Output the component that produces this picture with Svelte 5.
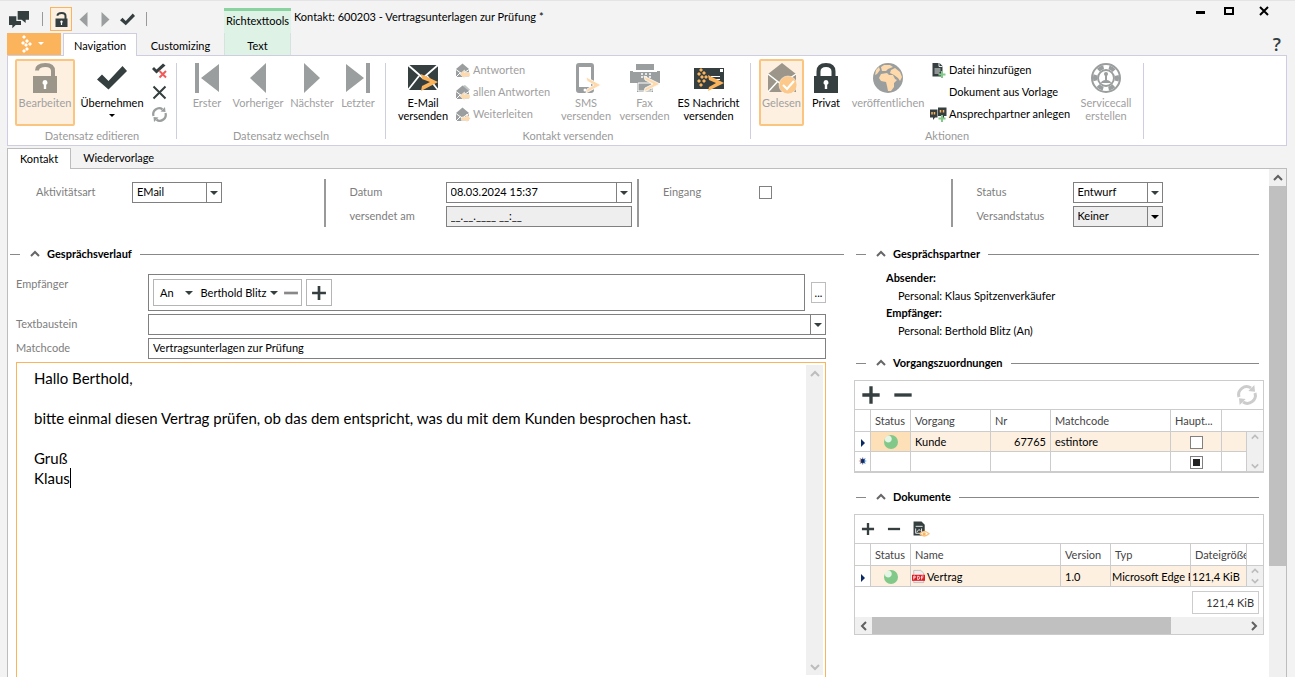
<script>
  let activityType = $state('EMail')
  let date = $state('08.03.2024 15:37')
  let incoming = $state(false)
  let status = $state('Entwurf')
  let matchcode = $state('Vertragsunterlagen zur Prüfung')
  let message = $state(
    'Hallo Berthold,\n\nbitte einmal diesen Vertrag prüfen, ob das dem entspricht, was du mit dem Kunden besprochen hast.\n\nGruß\nKlaus'
  )

  const groups = [
    {
      id: 'edit',
      label: 'Datensatz editieren',
      items: [
        { text: 'Bearbeiten', icon: 'unlock', disabled: true, active: true },
        { text: 'Übernehmen', icon: 'check', menu: true },
        {
          list: [
            { title: 'Verwerfen', icon: 'check-x' },
            { title: 'Schließen', icon: 'x' },
            { title: 'Aktualisieren', icon: 'refresh', disabled: true },
          ],
        },
      ],
    },
    {
      id: 'move',
      label: 'Datensatz wechseln',
      items: [
        { text: 'Erster', icon: 'first', disabled: true },
        { text: 'Vorheriger', icon: 'prev', disabled: true },
        { text: 'Nächster', icon: 'next', disabled: true },
        { text: 'Letzter', icon: 'last', disabled: true },
      ],
    },
    {
      id: 'send',
      label: 'Kontakt versenden',
      items: [
        { text: 'E-Mail\nversenden', icon: 'mail' },
        {
          list: [
            { text: 'Antworten', icon: 'reply', disabled: true },
            { text: 'allen Antworten', icon: 'reply-all', disabled: true },
            { text: 'Weiterleiten', icon: 'forward', disabled: true },
          ],
        },
        { text: 'SMS\nversenden', icon: 'sms', disabled: true },
        { text: 'Fax\nversenden', icon: 'fax', disabled: true },
        { text: 'ES Nachricht\nversenden', icon: 'es' },
      ],
    },
    {
      id: 'actions',
      label: 'Aktionen',
      items: [
        { text: 'Gelesen', icon: 'read', disabled: true, active: true },
        { text: 'Privat', icon: 'lock' },
        { text: 'veröffentlichen', icon: 'globe', disabled: true },
        {
          list: [
            { text: 'Datei hinzufügen', icon: 'file-add' },
            { text: 'Dokument aus Vorlage', icon: 'none' },
            { text: 'Ansprechpartner anlegen', icon: 'contact-add' },
          ],
        },
        { text: 'Servicecall\nerstellen', icon: 'service', disabled: true },
      ],
    },
  ]
</script>

{#snippet icon(name, size = 30)}
  <svg class="icon" width={size} height={size} viewBox="0 0 30 30" fill="currentColor" aria-hidden="true">
    {#if name === 'unlock'}
      <path d="M3 13H27V30H3Z" />
      <path d="M7 7.500C7 3 10.500 2 15.500 2S23 4 23 8V14" fill="none" stroke="currentColor" stroke-width="4" />
      <path d="M15 17a2.500 2.500 0 0 1 1.200 4.700V26h-2.400v-4.300A2.500 2.500 0 0 1 15 17Z" fill="#fff" />
    {:else if name === 'lock'}
      <path d="M3 13H27V30H3Z" />
      <path d="M7.500 14V8.500C7.500 4 10 2 15 2s7.500 2 7.500 6.500V14" fill="none" stroke="currentColor" stroke-width="4" />
      <path d="M15 17a2.500 2.500 0 0 1 1.200 4.700V26h-2.400v-4.300A2.500 2.500 0 0 1 15 17Z" fill="#fff" />
    {:else if name === 'check'}
      <path d="M0 16.500 5 11.500 11.500 18 25.500 3 30 8 11.500 26.500Z" />
    {:else if name === 'check-x'}
      <path d="M0 12 4 8 9 13 22 1 27 5 9 21Z" />
      <path d="M15 16 28 29M28 16 15 29" stroke="#ef5b5b" stroke-width="4" />
    {:else if name === 'x'}
      <path d="M3 3 27 27M27 3 3 27" stroke="currentColor" stroke-width="4" />
    {:else if name === 'refresh'}
      <path d="M3 18A12 12 0 0 1 21 4.500M27 12A12 12 0 0 1 9 25.500" fill="none" stroke="currentColor" stroke-width="4.500" />
      <path d="M17 9 27 10 26 0ZM13 21 3 20 4 30Z" />
    {:else if name === 'first'}
      <path d="M3 0H7V30H3ZM27 1V29L9 15Z" />
    {:else if name === 'last'}
      <path d="M23 0H27V30H23ZM3 1V29L21 15Z" />
    {:else if name === 'prev'}
      <path d="M23 0V30L7 15Z" />
    {:else if name === 'next'}
      <path d="M7 0V30L23 15Z" />
    {:else if name === 'mail'}
      <path d="M0 2H30V27H0Z" />
      <path d="M0 2 15 15 30 2M0 27 11 13M30 27 19 13" fill="none" stroke="#fff" stroke-width="1.800" />
      <path d="M13 11 30 19 13 28 14 23 22 19 14 16Z" fill="#fbb45c" />
    {:else if name === 'reply' || name === 'reply-all' || name === 'forward'}
      <path d="M2 12 15 1 28 12V28H2Z" />
      <path d="M2 13 14 22M28 13 17 20M2 28 11 19" stroke="#fff" stroke-width="2" />
      {#if name === 'reply-all'}
        <path d="M15 2 27 12 30 9 20 0Z" opacity="0.600" />
      {/if}
      {#if name === 'forward'}
        <path d="M31 23 23 14V20H13V27H23V31Z" fill="#fdd9ac" stroke="#fff" />
      {:else}
        <path d="M10 22 19 14V19H30V27H19V31Z" fill="#fdd9ac" stroke="#fff" />
      {/if}
    {:else if name === 'sms'}
      <path d="M8 0H20Q23 0 23 3V27Q23 30 20 30H8Q5 30 5 27V3Q5 0 8 0ZM8 4V24H20V4Z" fill-rule="evenodd" />
      <circle cx="14" cy="27" r="1.500" fill="#fff" />
      <path d="M15 14 30 22 15 30 16 26 23 22 16 18Z" fill="#fdd9ac" stroke="#fff" stroke-width="0.800" />
    {:else if name === 'fax'}
      <path d="M6 1H24V7H6ZM0 8H3V9H27V8H30V20H23V29H7V20H0Z" />
      <path d="M8 20H22V28H8Z" fill="none" stroke="#fff" />
      <path d="M11 11H13M15 11H17M19 11H21M11 14H13M15 14H17M19 14H21" stroke="#fff" stroke-width="1.500" />
      <path d="M14 13 30 21 14 29 15 25 23 21 15 17Z" fill="#fdd9ac" stroke="#fff" stroke-width="0.800" />
    {:else if name === 'es'}
      <path d="M0 5H30V26H0Z" />
      <path d="M26 6H29V9H26ZM17 13H26V14H17ZM18 16H26V17H18Z" fill="#fff" />
      <path d="M7 5 9 7 7 9 5 7ZM10 8 12 10 10 12 8 10ZM5 9 7 11 5 13 3 11ZM12 12 14 14 12 16 10 14ZM8 12 10 14 8 16 6 14ZM10 16 12 18 10 20 8 18ZM5 16 7 18 5 20 3 18ZM7 20 9 22 7 24 5 22Z" fill="#fbb45c" />
      <path d="M14 12 30 20 14 28 15 24 22 20 15 17Z" fill="#fbb45c" />
    {:else if name === 'read'}
      <path d="M1 11 15 0 29 11V29H1Z" />
      <path d="M1 11 14 21 29 11M1 29 11 18" fill="none" stroke="#fff" stroke-width="1.500" />
      <circle cx="21" cy="22" r="9" fill="#fcc98b" stroke="#fff" stroke-width="0.500" />
      <path d="M16 22 20 26 27 18" fill="none" stroke="#fff" stroke-width="2.200" />
    {:else if name === 'globe'}
      <circle cx="15" cy="15" r="15" />
      <path d="M3 7 6 4 7 7 4 11 2 12ZM8 4 11 2 17 2 20 4 15 6 13 8 9 8ZM8 11 14 10 16 12 20 12 22 16 24 17 21 20 21 24 18 28 15 28 14 23 13 19 8 18 6 15ZM18 7 22 5 27 9 29 14 27 18 25 15 21 12 17 10Z" fill="#fdd9ac" />
    {:else if name === 'service'}
      <circle cx="15" cy="15" r="14" fill="none" stroke="currentColor" stroke-width="2" />
      <circle cx="15" cy="15" r="11" fill="none" stroke="currentColor" stroke-width="4" stroke-dasharray="6 5.519" stroke-dashoffset="3" />
      <circle cx="15" cy="15" r="8" fill="none" stroke="currentColor" stroke-width="2" />
      <circle cx="15" cy="11" r="2" />
      <path d="M14 12H16V17Q20 18 20 20H10Q10 18 14 17Z" />
    {:else if name === 'file-add'}
      <path d="M3 0H17L23 6V27H3Z" />
      <path d="M16 0V7H23M7 12H19M7 16H19M7 20H17" fill="none" stroke="#fff" stroke-width="1.800" />
      <path d="M22 16V30M15 23H29" stroke="#82c889" stroke-width="4" />
    {:else if name === 'contact-add'}
      <path d="M-2 5H13V21H8L4 26V21H-2ZM14 1H31V18H26V23L20 18H14Z" />
      <path d="M2 10V15M7 10V15M19 6V11M25 6V11" stroke="#fbb45c" stroke-width="3" />
      <path d="M22 16V30M15 23H29" stroke="#82c889" stroke-width="4" />
    {:else if name === 'chat'}
      <path d="M13 3H30V16H25V21L19 16H13Z" />
      <path d="M0 11H11V18H18V24H10L5 29V24H0Z" />
    {:else if name === 'plus'}
      <path d="M12.500 2H17.500V12.500H28V17.500H17.500V28H12.500V17.500H2V12.500H12.500Z" />
    {:else if name === 'minus'}
      <path d="M2 12.500H28V17.500H2Z" />
    {:else if name === 'preview'}
      <path d="M1 1H16L22 7V27H1Z" />
      <path d="M5 10H18M5 14V23H16V14M7 21 11 16 14 18" fill="none" stroke="#fff" stroke-width="1.600" />
      <path d="M13 24Q21 15 30 24Q21 32 13 24Z" fill="#fff" stroke="#fbc07a" stroke-width="2.500" />
      <circle cx="21" cy="24" r="3" fill="#fbb45c" />
    {:else if name === 'pdf'}
      <path d="M4 1H20L27 7V29H4Z" fill="#eee" stroke="#aaa" stroke-width="1.500" />
      <path d="M0 11H30V25H0Z" fill="#e01a22" />
      <path d="M4 22V14H7Q9 16 7 18H4M13 14V22Q18 22 18 18T13 14M22 22V14H27M22 18H26" fill="none" stroke="#fff" stroke-width="1.800" />
    {/if}
  </svg>
{/snippet}

{#snippet arrow(dir)}
  <svg class="chevron {dir}" width="10" height="10" viewBox="0 0 10 10" aria-hidden="true">
    <path d="M1 7 5 3 9 7" fill="none" stroke="currentColor" stroke-width="2" />
  </svg>
{/snippet}

{#snippet heading(text)}
  <h2>
    <button aria-label="{text} einklappen">{@render arrow('up')}</button>
    <span>{text}</span>
  </h2>
{/snippet}

<div class="window">
  <header>
    <div class="titlebar">
      <div class="quick">
        <span class="app-icon">{@render icon('chat', 20)}</span>
        <i class="sep"></i>
        <button class="active" aria-label="Bearbeiten">{@render icon('unlock', 15)}</button>
        <button class="muted" aria-label="Zurück">{@render icon('prev', 15)}</button>
        <button class="muted" aria-label="Vor">{@render icon('next', 15)}</button>
        <button aria-label="Übernehmen">{@render icon('check', 15)}</button>
        <i class="sep"></i>
      </div>
      <div class="context-title">Richtexttools</div>
      <h1>Kontakt: 600203 - Vertragsunterlagen zur Prüfung *</h1>
      <div class="window-buttons">
        <button aria-label="Minimieren"><svg width="10" height="10"><path d="M0 5H9V8H0Z" /></svg></button>
        <button aria-label="Maximieren"><svg width="10" height="10"><path d="M1 2H9V8H1Z" fill="none" stroke="#000" stroke-width="2" /></svg></button>
        <button class="close" aria-label="Schließen"><svg width="10" height="10"><path d="M1 1 9 9M9 1 1 9" stroke="#000" stroke-width="2" /></svg></button>
      </div>
    </div>

    <nav class="ribbon-tabs">
      <button class="file" aria-label="Datei">
        <svg width="26" height="18" viewBox="0 0 26 18" fill="#fff">
          <path d="M3 0 5 2 3 4 1 2ZM6 4 8 6 6 8 4 6ZM2 6 4 8 2 10 0 8ZM9 7 11 9 9 11 7 9ZM5 8 7 10 5 12 3 10ZM6 12 8 14 6 16 4 14ZM3 14 5 16 3 18 1 16ZM17 7H23L20 10Z" />
        </svg>
      </button>
      <button class="tab selected">Navigation</button>
      <button class="tab">Customizing</button>
      <button class="context-tab">Text</button>
      <button class="help">?</button>
    </nav>
  </header>

  <div class="ribbon">
    {#each groups as group (group.id)}
      <section class="group">
        <div class="group-items {group.id}">
          {#each group.items as item}
            {#if item.list}
              <div class="small-list">
                {#each item.list as entry}
                  <button class="small" disabled={entry.disabled} aria-label={entry.title}>
                    {@render icon(entry.icon, 15)}
                    {#if entry.text}<span>{entry.text}</span>{/if}
                  </button>
                {/each}
              </div>
            {:else}
              <button class="large" class:active={item.active} disabled={item.disabled}>
                {@render icon(item.icon)}
                <span>{item.text}</span>
                {#if item.menu}<i class="triangle"></i>{/if}
              </button>
            {/if}
          {/each}
        </div>
        <div class="group-label">{group.label}</div>
      </section>
    {/each}
  </div>

  <nav class="page-tabs">
    <button class="selected">Kontakt</button>
    <button>Wiedervorlage</button>
  </nav>

  <div class="page">
    <main>
      <div class="top-form">
        <div class="form-col">
          <div class="field">
            <label for="activity">Aktivitätsart</label>
            <div class="combo">
              <select id="activity" bind:value={activityType}><option>EMail</option></select>
              <span class="drop"><i class="triangle"></i></span>
            </div>
          </div>
        </div>
        <div class="form-col">
          <div class="field">
            <label for="date">Datum</label>
            <div class="combo wide">
              <input id="date" type="text" bind:value={date} />
              <span class="drop"><i class="triangle"></i></span>
            </div>
          </div>
          <div class="field">
            <label for="sent">versendet am</label>
            <div class="combo wide readonly">
              <input id="sent" type="text" value="__.__.____ __:__" readonly />
            </div>
          </div>
        </div>
        <div class="form-col">
          <div class="field">
            <label for="incoming">Eingang</label>
            <input id="incoming" type="checkbox" bind:checked={incoming} />
          </div>
        </div>
        <div class="form-col">
          <div class="field">
            <label for="status">Status</label>
            <div class="combo">
              <select id="status" bind:value={status}><option>Entwurf</option></select>
              <span class="drop"><i class="triangle"></i></span>
            </div>
          </div>
          <div class="field">
            <label for="send-status">Versandstatus</label>
            <div class="combo readonly">
              <select id="send-status"><option>Keiner</option></select>
              <span class="drop"><i class="triangle"></i></span>
            </div>
          </div>
        </div>
      </div>

      <div class="columns">
        <section class="conversation">
          {@render heading('Gesprächsverlauf')}
          <div class="details">
            <div class="detail-row recipients">
              <span class="row-label">Empfänger</span>
              <div class="recipient-box">
                <div class="chip">
                  <button class="kind">An <i class="triangle"></i></button>
                  <button>Berthold Blitz <i class="triangle"></i></button>
                  <button class="remove" aria-label="Empfänger entfernen">{@render icon('minus', 16)}</button>
                </div>
                <button class="add" aria-label="Empfänger hinzufügen">{@render icon('plus', 16)}</button>
              </div>
              <button class="more">...</button>
            </div>
            <div class="detail-row">
              <label for="snippet">Textbaustein</label>
              <div class="combo">
                <select id="snippet"><option></option></select>
                <span class="drop"><i class="triangle"></i></span>
              </div>
            </div>
            <div class="detail-row">
              <label for="matchcode">Matchcode</label>
              <div class="combo"><input id="matchcode" type="text" bind:value={matchcode} /></div>
            </div>
            <div class="editor">
              <textarea aria-label="Nachricht" spellcheck="false" bind:value={message}></textarea>
              <i class="caret"></i>
              <div class="scrollbar faint">
                {@render arrow('up')}
                {@render arrow('down')}
              </div>
            </div>
          </div>
        </section>

        <aside>
          <section>
            {@render heading('Gesprächspartner')}
            <dl>
              <dt>Absender:</dt>
              <dd>Personal: Klaus Spitzenverkäufer</dd>
              <dt>Empfänger:</dt>
              <dd>Personal: Berthold Blitz (An)</dd>
            </dl>
          </section>

          <section>
            {@render heading('Vorgangszuordnungen')}
            <div class="grid-box">
              <div class="toolbar large-icons">
                <button aria-label="Hinzufügen">{@render icon('plus', 20)}</button>
                <button aria-label="Entfernen">{@render icon('minus', 20)}</button>
                <button class="reload" aria-label="Aktualisieren">{@render icon('refresh', 20)}</button>
              </div>
              <table>
                <colgroup>
                  <col class="c-mark" /><col class="c-status" /><col class="c-process" /><col class="c-nr" /><col />
                  <col class="c-main" /><col class="c-rest" /><col class="c-scroll" />
                </colgroup>
                <thead>
                  <tr>
                    <th></th><th>Status</th><th>Vorgang</th><th>Nr</th><th>Matchcode</th><th>Haupt...</th><th colspan="2"></th>
                  </tr>
                </thead>
                <tbody>
                  <tr class="current">
                    <td class="mark"><i class="pointer"></i></td>
                    <td class="center focus"><i class="ball"></i></td>
                    <td>Kunde</td>
                    <td class="number">67765</td>
                    <td>estintore</td>
                    <td class="center"><input type="checkbox" aria-label="Hauptvorgang" /></td>
                    <td></td>
                    <td class="scroll-cell" rowspan="2">
                      <div class="scrollbar faint">{@render arrow('up')}{@render arrow('down')}</div>
                    </td>
                  </tr>
                  <tr>
                    <td class="mark star">✷</td>
                    <td></td><td></td><td></td><td></td>
                    <td class="center"><input type="checkbox" aria-label="Hauptvorgang neu" indeterminate={true} /></td>
                    <td></td>
                  </tr>
                </tbody>
              </table>
            </div>
          </section>

          <section>
            {@render heading('Dokumente')}
            <div class="grid-box">
              <div class="toolbar">
                <button aria-label="Hinzufügen">{@render icon('plus', 14)}</button>
                <button aria-label="Entfernen">{@render icon('minus', 14)}</button>
                <button aria-label="Vorschau">{@render icon('preview', 16)}</button>
              </div>
              <table>
                <colgroup>
                  <col class="c-mark" /><col class="c-status" /><col /><col class="c-version" /><col class="c-type" />
                  <col class="c-size" /><col class="c-scroll" />
                </colgroup>
                <thead>
                  <tr>
                    <th></th><th>Status</th><th>Name</th><th>Version</th><th>Typ</th><th>Dateigröße</th><th></th>
                  </tr>
                </thead>
                <tbody>
                  <tr class="current">
                    <td class="mark"><i class="pointer"></i></td>
                    <td class="center"><i class="ball"></i></td>
                    <td class="tight"><span class="file-name">{@render icon('pdf', 13)} Vertrag</span></td>
                    <td>1.0</td>
                    <td class="tight">Microsoft Edge P</td>
                    <td class="tight">121,4 KiB</td>
                    <td class="scroll-cell">
                      <div class="scrollbar faint">{@render arrow('up')}{@render arrow('down')}</div>
                    </td>
                  </tr>
                </tbody>
              </table>
              <div class="sum"><output>121,4 KiB</output></div>
              <div class="scrollbar horizontal">
                {@render arrow('left')}
                <div class="track"><i class="thumb"></i></div>
                {@render arrow('right')}
              </div>
            </div>
          </section>
        </aside>
      </div>
    </main>

    <div class="scrollbar page-scroll">
      {@render arrow('up')}
      <div class="track"><i class="thumb"></i></div>
    </div>
  </div>
</div>

<style>
  :global(body) {
    margin: 0;
    background: #f3f3f3;
  }

  .window {
    box-sizing: border-box;
    height: 100vh;
    overflow: hidden;
    display: flex;
    flex-direction: column;
    padding: 0 8px 0 7px;
    border-top: 1px solid #e4e4e6;
    color: #000;
    background: #f3f3f3;
    font-family: Lato, Carlito, Calibri, sans-serif;
    font-size: 11px;
    line-height: 13px;
  }

  .window :global(*) {
    box-sizing: border-box;
  }

  button {
    padding: 0;
    border: 0;
    background: none;
    color: #353f40;
    font: inherit;
    white-space: nowrap;
  }

  .icon {
    color: #353f40;
  }

  svg {
    display: block;
    flex: none;
    overflow: visible;
  }

  button .icon {
    color: inherit;
  }

  .triangle {
    border: 4px solid transparent;
    border-top: 4px solid #353f40;
    border-bottom: 0;
  }

  /* title bar */
  .titlebar {
    display: flex;
    height: 32px;
  }

  .quick {
    display: flex;
    align-items: center;
    width: 217px;
    padding: 4px 0 0 2px;
  }

  .quick button {
    display: grid;
    place-items: center;
    width: 22px;
    height: 24px;
  }

  .quick .active {
    border: 1px solid #fbb45c;
    background: #fdf0e0;
  }

  .quick .muted {
    color: #9b9e9e;
  }

  .sep {
    width: 1px;
    height: 14px;
    margin: 0 7px 0 13px;
    background: #999;
  }

  .sep:last-child {
    margin: 0 0 0 8px;
  }

  .context-title {
    width: 67px;
    margin-top: 7px;
    padding-top: 3px;
    border-top: 3px solid #8ad2a0;
    background: #def2e6;
    text-align: center;
  }

  h1 {
    margin: 0;
    padding-left: 3px;
    font-size: 11px;
    font-weight: 400;
    line-height: 32px;
  }

  .window-buttons {
    display: flex;
    gap: 18px;
    margin-left: auto;
    padding: 5px 18px 0 0;
    align-items: flex-start;
  }

  .window-buttons .close {
    margin-left: 7px;
  }

  .ribbon-tabs {
    display: flex;
    height: 22px;
  }

  .ribbon-tabs button {
    color: #000;
  }

  .file {
    display: grid;
    place-items: center;
    width: 54px;
    margin-right: 2px;
    background: #fbb45c;
  }

  .tab {
    width: 87px;
    padding-top: 2px;
    border: 1px solid transparent;
    border-bottom: 0;
  }

  .tab.selected {
    position: relative;
    z-index: 1;
    width: 74px;
    height: 23px;
    padding-top: 0;
    border-color: #cfcde0;
    background: #fff;
  }

  .context-tab {
    width: 67px;
    padding-top: 2px;
    border: 1px solid #d5e2e0;
    border-width: 0 1px;
    background: #def2e6;
  }

  .ribbon-tabs .help {
    margin-left: auto;
    padding-right: 6px;
    color: #353f40;
    font-family: 'Open Sans', sans-serif;
    font-size: 18px;
    font-weight: 600;
    line-height: 18px;
  }

  /* ribbon */
  .ribbon {
    display: flex;
    flex: none;
    height: 91px;
    padding-top: 3px;
    border: 1px solid #cfcde0;
    background: #fff;
  }

  .group {
    position: relative;
    border-right: 1px solid transparent;
  }

  .group::after {
    content: '';
    position: absolute;
    top: 4px;
    right: -1px;
    width: 1px;
    height: 76px;
    background: #cfcde0;
  }

  .group-items {
    display: grid;
    height: 67px;
  }

  .group-items.edit {
    grid-template-columns: 60px 74px 22px;
    padding: 0 5px 0 7px;
  }

  .group-items.move {
    grid-template-columns: 40px 62px 46px 46px;
    padding: 0 4px 0 10px;
  }

  .group-items.send {
    grid-template-columns: 58px 105px 58px 59px 69px;
    padding: 0 7px 0 8px;
  }

  .group-items.actions {
    grid-template-columns: 45px 44px 80px 148px 60px;
    padding: 0 7px 0 8px;
  }

  .group-label {
    padding-top: 3px;
    color: #999;
    text-align: center;
  }

  .large {
    display: flex;
    flex-direction: column;
    align-items: center;
    padding-top: 3px;
    border: 1px solid transparent;
    border-radius: 2px;
  }

  .large span {
    margin: 3px -8px 0;
    color: #000;
    white-space: pre-line;
  }

  .large .triangle {
    margin-top: 5px;
    border-width: 3px 3px 0;
    border-top-color: #000;
  }

  .large:disabled,
  .small:disabled {
    color: #9b9e9e;
  }

  .large:disabled span,
  .small:disabled span {
    color: #a0a0a0;
  }

  .large.active {
    border: 2px solid #fbc580;
    padding-top: 2px;
    background: #fdf0e0;
    color: #9b9689;
  }

  .small-list {
    display: flex;
    flex-direction: column;
    padding: 0 3px;
  }

  .small {
    display: flex;
    align-items: center;
    gap: 3px;
    height: 22px;
  }

  .small span {
    padding-bottom: 2px;
    color: #000;
  }

  /* page */
  .page-tabs {
    display: flex;
    height: 22px;
    flex: none;
    margin-top: 2px;
  }

  .page-tabs button {
    padding: 0 12px 3px;
    color: #000;
  }

  .page-tabs .selected {
    position: relative;
    z-index: 1;
    height: 21px;
    padding-bottom: 1px;
    border: 1px solid #bdbdbd;
    border-bottom: 0;
    background: #fff;
  }

  .page {
    display: flex;
    flex: 1;
    min-height: 0;
    margin-top: -2px;
    border: 1px solid #bdbdbd;
    border-bottom: 0;
    background: #fff;
  }

  main {
    display: flex;
    flex: 1;
    flex-direction: column;
    min-width: 0;
    padding-top: 10px;
  }

  .top-form {
    display: grid;
    flex: none;
    grid-template-columns: repeat(4, 1fr);
    height: 48px;
    padding: 0 3px 0 4px;
  }

  .form-col {
    display: flex;
    flex-direction: column;
    gap: 3px;
    padding: 3px 0 0 24px;
    border-right: 2px solid #999;
  }

  .form-col:last-child {
    border-right-color: transparent;
  }

  .field {
    display: grid;
    grid-template-columns: 96px 1fr;
    align-items: center;
    height: 21px;
  }

  label,
  .row-label {
    padding-bottom: 2px;
    color: #7d7d7d;
  }

  .combo {
    display: flex;
    height: 21px;
    border: 1px solid #808080;
    background: #fff;
  }

  .field .combo {
    width: 90px;
  }

  .field .combo.wide {
    width: 186px;
  }

  .combo.readonly {
    background: #eee;
  }

  .combo select,
  .combo input {
    flex: 1;
    min-width: 0;
    appearance: none;
    padding: 0 4px 2px;
    border: 0;
    outline: 0;
    background: none;
    color: #000;
    font: inherit;
  }

  .drop {
    display: grid;
    place-items: center;
    width: 15px;
    border-left: 1px solid #808080;
  }

  .readonly .triangle {
    border-top-color: #000;
  }

  input[type='checkbox'] {
    appearance: none;
    width: 13px;
    height: 13px;
    margin: 0;
    border: 1px solid #808080;
    background: #fff;
  }

  input[type='checkbox']:checked,
  input[type='checkbox']:indeterminate {
    background: #222;
    box-shadow: inset 0 0 0 2px #fff;
  }

  .columns {
    display: grid;
    flex: 1;
    grid-template-columns: minmax(0, 834fr) minmax(0, 410fr);
    gap: 10px;
    min-height: 0;
    padding: 20px 5px 0 2px;
  }

  h2 {
    display: flex;
    align-items: center;
    flex: none;
    height: 14px;
    margin: 0;
    font-size: 11px;
    font-weight: 700;
  }

  h2::before,
  h2::after {
    content: '';
    width: 10px;
    height: 1px;
    background: #888;
  }

  h2::after {
    flex: 1;
  }

  h2 button {
    padding: 0 7px 0 10px;
    color: #666;
  }

  h2 span {
    margin-right: 8px;
    padding-bottom: 1px;
  }

  .conversation {
    display: flex;
    flex-direction: column;
    min-height: 0;
  }

  .details {
    display: flex;
    flex: 1;
    flex-direction: column;
    gap: 3px;
    min-height: 0;
    padding: 13px 18px 0 6px;
  }

  .detail-row {
    display: grid;
    grid-template-columns: 132px 1fr;
    align-items: center;
  }

  .detail-row.recipients {
    grid-template-columns: 132px 1fr 15px;
  }

  .row-label {
    align-self: start;
    padding-top: 3px;
  }

  .recipient-box {
    display: flex;
    gap: 4px;
    height: 37px;
    margin-right: 6px;
    padding: 4px;
    border: 1px solid #808080;
  }

  .chip {
    display: flex;
    gap: 8px;
    padding: 0 2px 0 6px;
    border: 1px solid #b5b5b5;
  }

  .chip button {
    display: flex;
    gap: 4px;
    align-items: center;
    color: #000;
  }

  .chip .kind {
    gap: 11px;
  }

  .chip .remove {
    margin-left: -3px;
    color: #888;
  }

  .add {
    display: grid;
    place-items: center;
    width: 26px;
    border: 1px solid #b5b5b5;
  }

  .more {
    height: 21px;
    border: 1px solid #bdbdbd;
    color: #000;
  }

  .editor {
    position: relative;
    display: flex;
    flex: 1;
    min-height: 0;
    padding: 2px 2px 2px 0;
    border: 1px solid #fbb45c;
    border-bottom: 0;
  }

  textarea {
    flex: 1;
    padding: 3px 17px;
    border: 0;
    outline: 0;
    resize: none;
    overflow: hidden;
    background: none;
    color: #000;
    font: 15px/20px Lato, Carlito, Calibri, sans-serif;
  }

  .caret {
    position: absolute;
    top: 105px;
    left: 53px;
    width: 1px;
    height: 20px;
    background: #000;
  }

  /* scrollbars */
  .scrollbar {
    display: flex;
    flex-direction: column;
    align-items: center;
    justify-content: space-between;
    flex: none;
    width: 17px;
    background: #f0f0f0;
    color: #606060;
  }

  .scrollbar :global(.chevron) {
    margin: 4px 0 3px;
  }

  .scrollbar.faint {
    color: #bdbdbd;
  }

  .chevron.down {
    transform: rotate(180deg);
  }

  .chevron.left {
    transform: rotate(-90deg);
  }

  .chevron.right {
    transform: rotate(90deg);
  }

  .track {
    flex: 1;
    width: 100%;
  }

  .thumb {
    display: block;
    height: 77%;
    background: #c0c0c0;
  }

  .page-scroll .thumb {
    height: 380px;
  }

  .scrollbar.horizontal {
    flex-direction: row;
    width: 100%;
    height: 17px;
    gap: 3px;
    padding: 0 4px;
  }

  .horizontal .thumb {
    width: 80%;
    height: 17px;
  }

  /* right column */
  aside {
    display: flex;
    flex-direction: column;
    min-width: 0;
  }

  aside h2 {
    margin: 0 5px 0 2px;
  }

  dl {
    margin: 8px 0 17px 32px;
  }

  dt {
    font-weight: 700;
    line-height: 18px;
  }

  dd {
    margin-left: 12px;
    line-height: 17px;
  }

  .grid-box {
    margin: 10px 0 17px;
    border: 1px solid #ccc;
  }

  .toolbar {
    display: flex;
    align-items: center;
    gap: 12px;
    height: 29px;
    padding: 0 6px;
    border-bottom: 1px solid #ccc;
  }

  .toolbar .reload {
    margin-left: auto;
    color: #ccc;
  }

  table {
    width: 100%;
    table-layout: fixed;
    border-collapse: separate;
    border-spacing: 0;
  }

  .c-mark {
    width: 16px;
  }

  .c-status {
    width: 40px;
  }

  .c-process,
  .c-type {
    width: 80px;
  }

  .c-nr {
    width: 60px;
  }

  .c-main {
    width: 51px;
  }

  .c-version {
    width: 50px;
  }

  .c-rest {
    width: 25px;
  }

  .c-size {
    width: 56px;
  }

  .c-scroll {
    width: 16px;
  }

  th,
  td {
    height: 20px;
    padding: 0 4px;
    overflow: hidden;
    border: 1px solid #ccc;
    border-width: 0 1px 1px 0;
    text-align: left;
    white-space: nowrap;
  }

  th {
    height: 22px;
    color: #444;
    font-weight: 400;
  }

  th:last-child,
  .scroll-cell {
    border-right: 0;
  }

  .current td {
    background: #fdf0e0;
  }

  .current td.mark {
    background: #fff;
  }

  .current td.focus {
    background: #fddfb8;
  }

  td.center {
    text-align: center;
  }

  td.number {
    text-align: right;
  }

  td.tight {
    padding: 0 1px;
  }

  td.mark {
    padding: 0;
    color: #0a2a66;
    text-align: center;
  }

  td.star {
    font-family: 'DejaVu Sans', sans-serif;
  }

  td input,
  td .ball {
    vertical-align: middle;
  }

  .scroll-cell {
    height: 1px;
    padding: 0;
  }

  .scroll-cell .scrollbar {
    width: 16px;
    height: 100%;
  }

  .scroll-cell :global(.chevron) {
    margin: 0;
    width: 8px;
  }

  .pointer {
    display: inline-block;
    border: 4px solid transparent;
    border-left-color: #0a2a66;
    border-right: 0;
    vertical-align: middle;
  }

  .ball {
    display: inline-block;
    width: 14px;
    height: 14px;
    border-radius: 50%;
    background: radial-gradient(circle at 30% 28%, #e3f5e5 0 3px, #82c889 4px);
  }

  .file-name {
    display: flex;
    align-items: center;
    gap: 2px;
  }

  .sum {
    display: flex;
    justify-content: flex-end;
    padding: 4px 4px 3px;
  }

  output {
    width: 67px;
    padding: 4px;
    border: 1px solid #ccc;
    color: #333;
    text-align: right;
  }
</style>
